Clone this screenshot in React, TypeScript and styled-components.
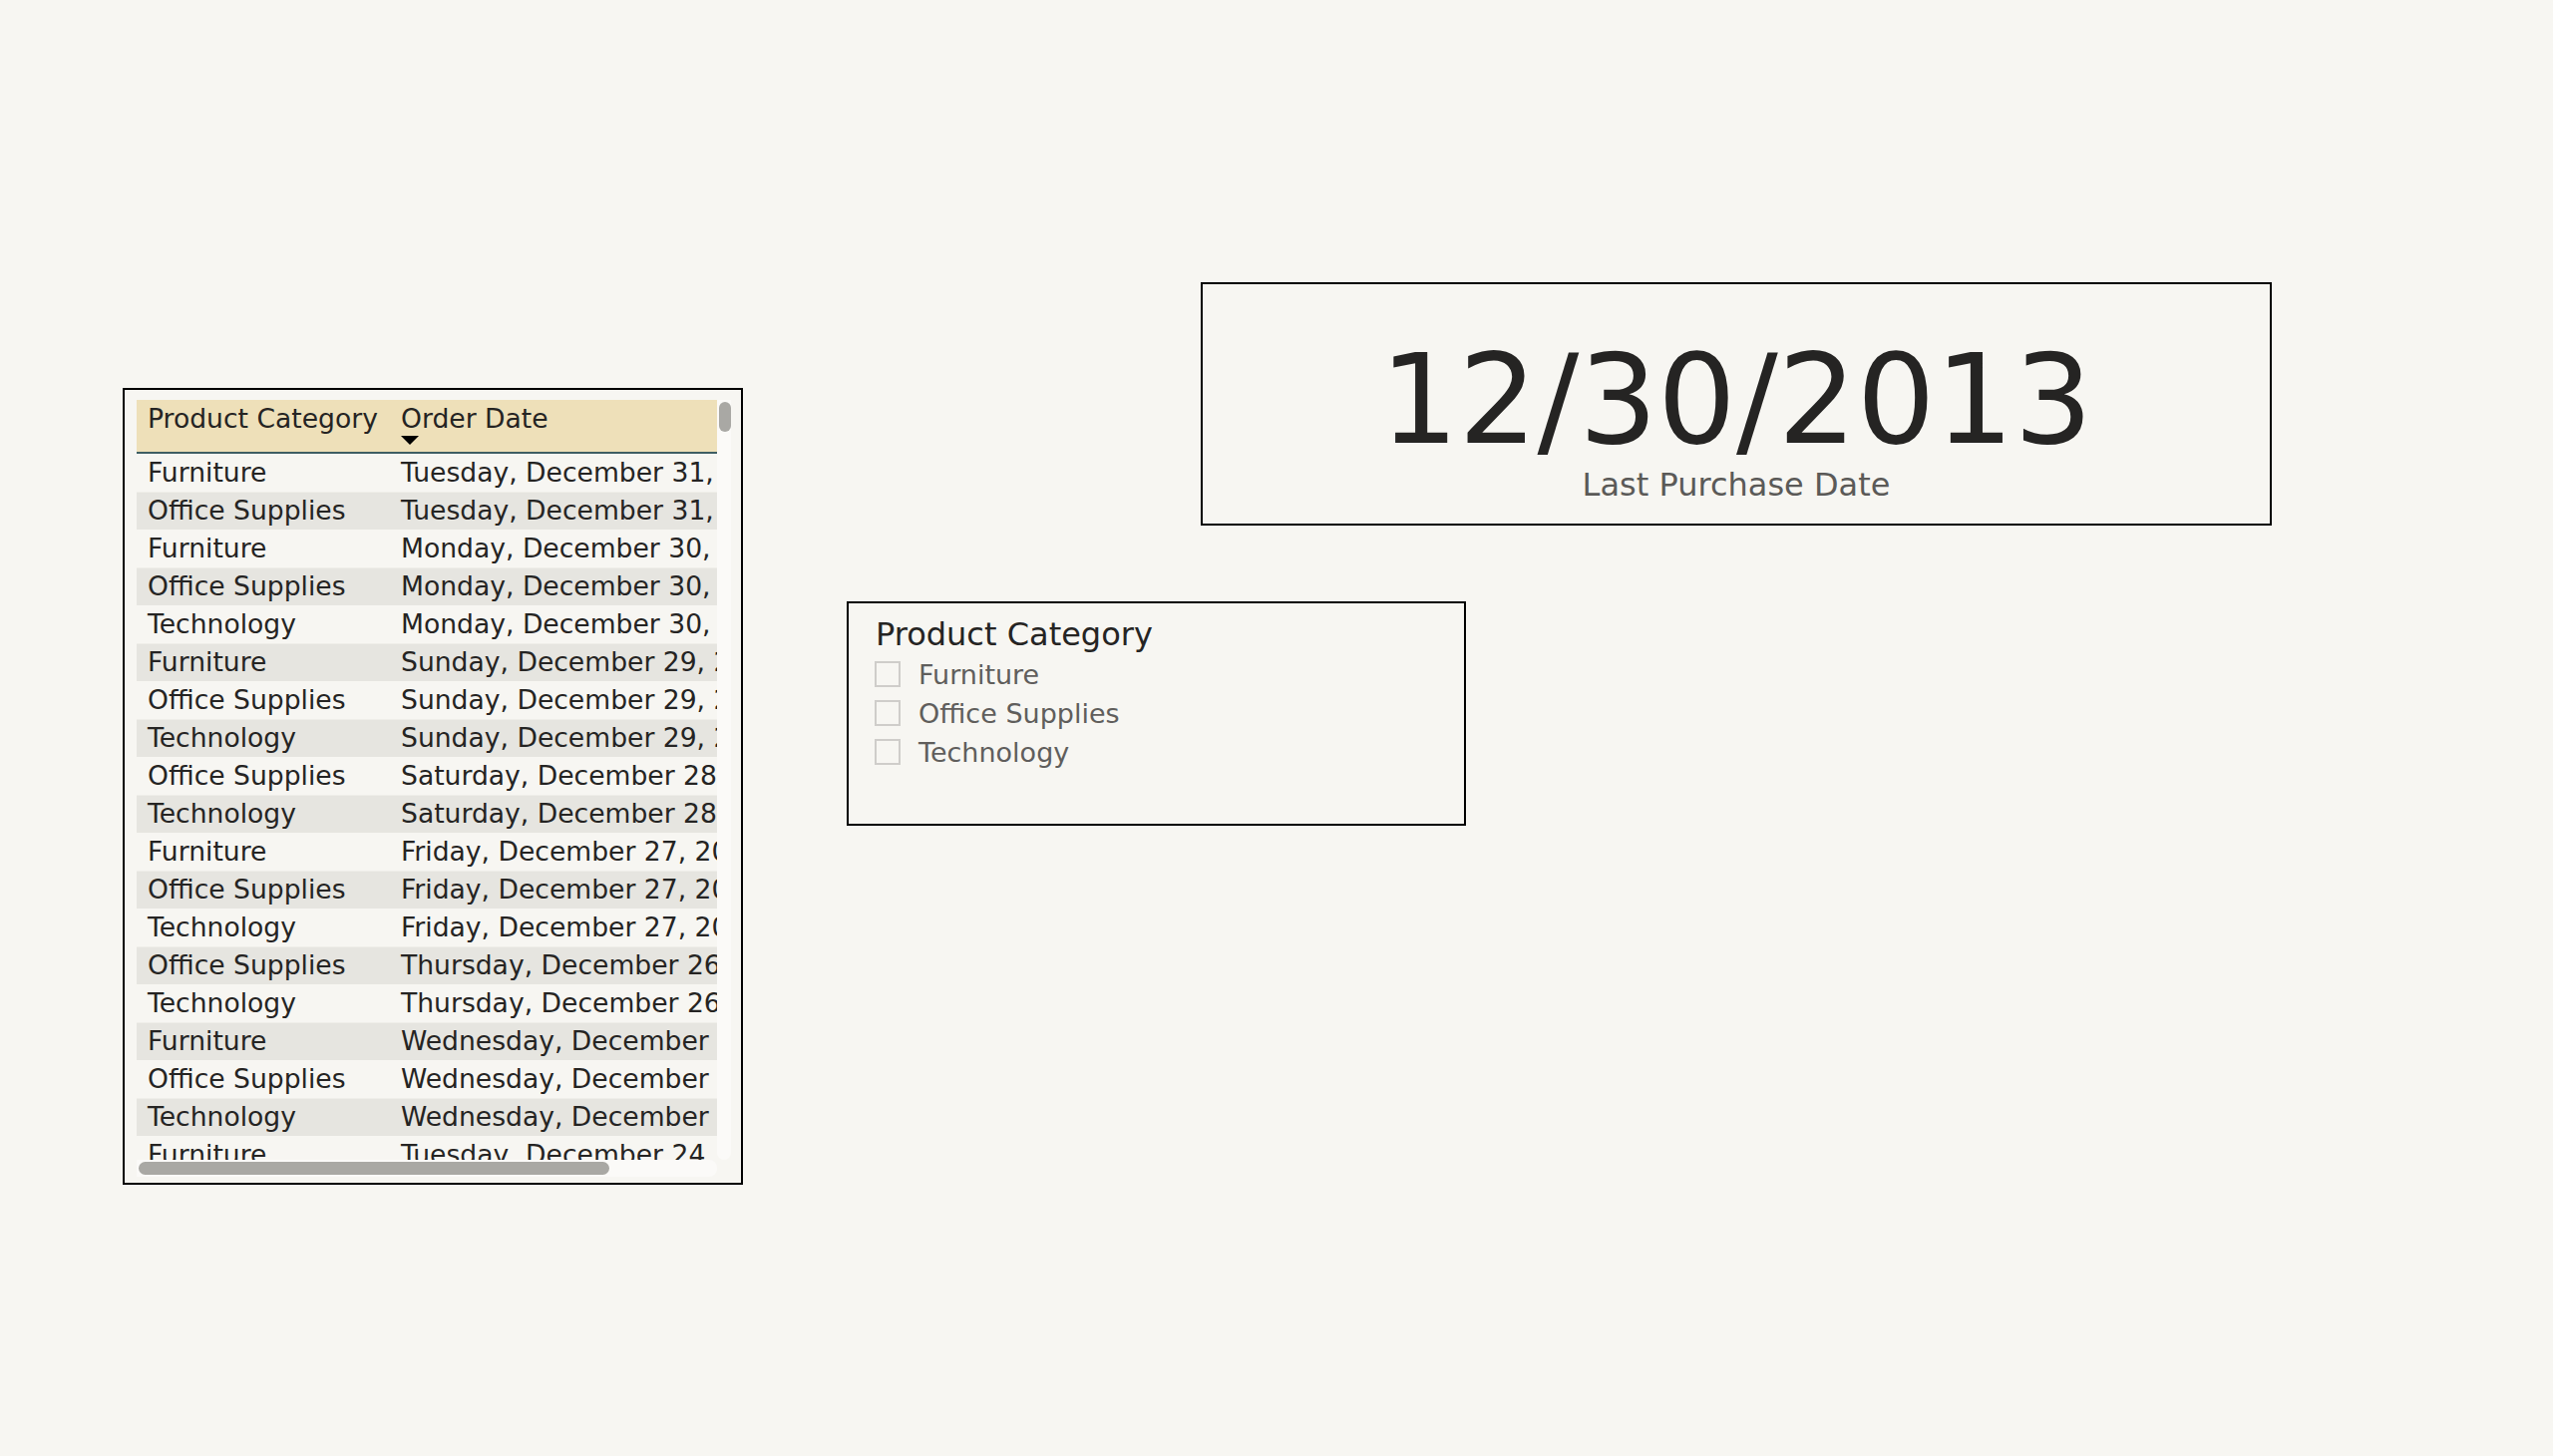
import React from "react";
import styled, { createGlobalStyle } from "styled-components";

const rows: [string, string][] = [
  ["Furniture", "Tuesday, December 31, 2013"],
  ["Office Supplies", "Tuesday, December 31, 2013"],
  ["Furniture", "Monday, December 30, 2013"],
  ["Office Supplies", "Monday, December 30, 2013"],
  ["Technology", "Monday, December 30, 2013"],
  ["Furniture", "Sunday, December 29, 2013"],
  ["Office Supplies", "Sunday, December 29, 2013"],
  ["Technology", "Sunday, December 29, 2013"],
  ["Office Supplies", "Saturday, December 28, 2013"],
  ["Technology", "Saturday, December 28, 2013"],
  ["Furniture", "Friday, December 27, 2013"],
  ["Office Supplies", "Friday, December 27, 2013"],
  ["Technology", "Friday, December 27, 2013"],
  ["Office Supplies", "Thursday, December 26, 2013"],
  ["Technology", "Thursday, December 26, 2013"],
  ["Furniture", "Wednesday, December 25, 2013"],
  ["Office Supplies", "Wednesday, December 25, 2013"],
  ["Technology", "Wednesday, December 25, 2013"],
  ["Furniture", "Tuesday, December 24, 2013"],
  ["Office Supplies", "Tuesday, December 24, 2013"],
];

const categories = ["Furniture", "Office Supplies", "Technology"];

const App = () => {
  return (
    <>
      <GlobalStyle />
      <Canvas>
        <TableBox>
          <TableGrid>
            <DataArea>
              <HeaderRow>
                <HeadCell $width={254}>Product Category</HeadCell>
                <HeadCell>
                  Order Date
                  <SortArrow />
                </HeadCell>
              </HeaderRow>
              {rows.map(([cat, date], i) => (
                <Row key={i} $alt={i % 2 === 1}>
                  <Cell $width={254}>{cat}</Cell>
                  <Cell>{date}</Cell>
                </Row>
              ))}
            </DataArea>
            <VTrack>
              <VThumb />
            </VTrack>
            <HTrack>
              <HThumb />
            </HTrack>
          </TableGrid>
        </TableBox>

        <RightColumn>
          <KpiCard>
            <KpiValue>12/30/2013</KpiValue>
            <KpiLabel>Last Purchase Date</KpiLabel>
          </KpiCard>

          <Slicer>
            <SlicerTitle>Product Category</SlicerTitle>
            {categories.map((c) => (
              <SlicerItem key={c}>
                <CheckBox />
                <span>{c}</span>
              </SlicerItem>
            ))}
          </Slicer>
        </RightColumn>
      </Canvas>
    </>
  );
};

export default App;

const GlobalStyle = createGlobalStyle`
  html, body {
    margin: 0;
    padding: 0;
    background: #f7f6f2;
  }
  body {
    font-family: "DejaVu Sans", Verdana, sans-serif;
    color: #252423;
  }
  * {
    box-sizing: border-box;
  }
`;

const Canvas = styled.div`
  display: flex;
  align-items: flex-start;
  width: 2560px;
  height: 1460px;
  padding: 283px 0 0 123px;
  background: #f7f6f2;
`;

const TableBox = styled.div`
  margin-top: 106px;
  width: 622px;
  height: 799px;
  border: 2px solid #000;
  padding: 10px 10px 6px 12px;
`;

const TableGrid = styled.div`
  display: grid;
  grid-template-columns: 582px 14px;
  grid-template-rows: 762px 17px;
`;

const DataArea = styled.div`
  overflow: hidden;
  font-size: 26.6px;
`;

const HeaderRow = styled.div`
  display: flex;
  height: 54px;
  background: #eee0b9;
  border-bottom: 2px solid #3e5e63;
`;

const HeadCell = styled.div<{ $width?: number }>`
  display: flex;
  flex-direction: column;
  align-items: flex-start;
  flex: ${(p) => (p.$width ? `0 0 ${p.$width}px` : "1 1 auto")};
  padding: 4px 11px 0;
  line-height: 30px;
  white-space: nowrap;
  overflow: hidden;
`;

const SortArrow = styled.span`
  margin-top: 2px;
  width: 0;
  height: 0;
  border-left: 9px solid transparent;
  border-right: 9px solid transparent;
  border-top: 9px solid #000;
`;

const Row = styled.div<{ $alt: boolean }>`
  display: flex;
  height: 38px;
  background: ${(p) => (p.$alt ? "#e6e5e0" : "#f7f6f2")};
  border-top: 1px solid ${(p) => (p.$alt ? "#efeee9" : "#f7f6f2")};
`;

const Cell = styled.div<{ $width?: number }>`
  flex: ${(p) => (p.$width ? `0 0 ${p.$width}px` : "1 1 auto")};
  padding: 0 11px;
  line-height: 36px;
  white-space: nowrap;
  overflow: hidden;
`;

const VTrack = styled.div`
  background: #fbfaf8;
  border-radius: 0 0 7px 7px;
  padding: 2px 0 0 2px;
`;

const VThumb = styled.div`
  width: 12px;
  height: 30px;
  border-radius: 6px;
  background: #a9a8a4;
`;

const HTrack = styled.div`
  background: #fbfaf8;
  border-radius: 0 8px 8px 0;
  padding: 2px 0 0 2px;
`;

const HThumb = styled.div`
  width: 472px;
  height: 13px;
  border-radius: 7px;
  background: #a9a8a4;
`;

const RightColumn = styled.div`
  display: flex;
  flex-direction: column;
  align-items: flex-start;
  margin-left: 104px;
`;

const KpiCard = styled.div`
  margin-left: 355px;
  width: 1074px;
  height: 244px;
  border: 2px solid #000;
  padding-top: 44px;
  display: flex;
  flex-direction: column;
  align-items: center;
`;

const KpiValue = styled.div`
  font-size: 124px;
  line-height: 144px;
  color: #252423;
`;

const KpiLabel = styled.div`
  margin-top: -6px;
  font-size: 32px;
  line-height: 38px;
  color: #5b5a58;
`;

const Slicer = styled.div`
  margin-top: 76px;
  width: 621px;
  height: 225px;
  border: 2px solid #000;
  padding: 12px 27px;
  display: flex;
  flex-direction: column;
  gap: 1px;
`;

const SlicerTitle = styled.div`
  font-size: 32px;
  line-height: 38px;
  color: #252423;
  margin-bottom: 1px;
`;

const SlicerItem = styled.div`
  display: flex;
  align-items: center;
  gap: 18px;
  margin-left: -1px;
  height: 38px;
  font-size: 27px;
  color: #605e5c;
`;

const CheckBox = styled.span`
  width: 26px;
  height: 26px;
  border: 2px solid #cfcdca;
`;
